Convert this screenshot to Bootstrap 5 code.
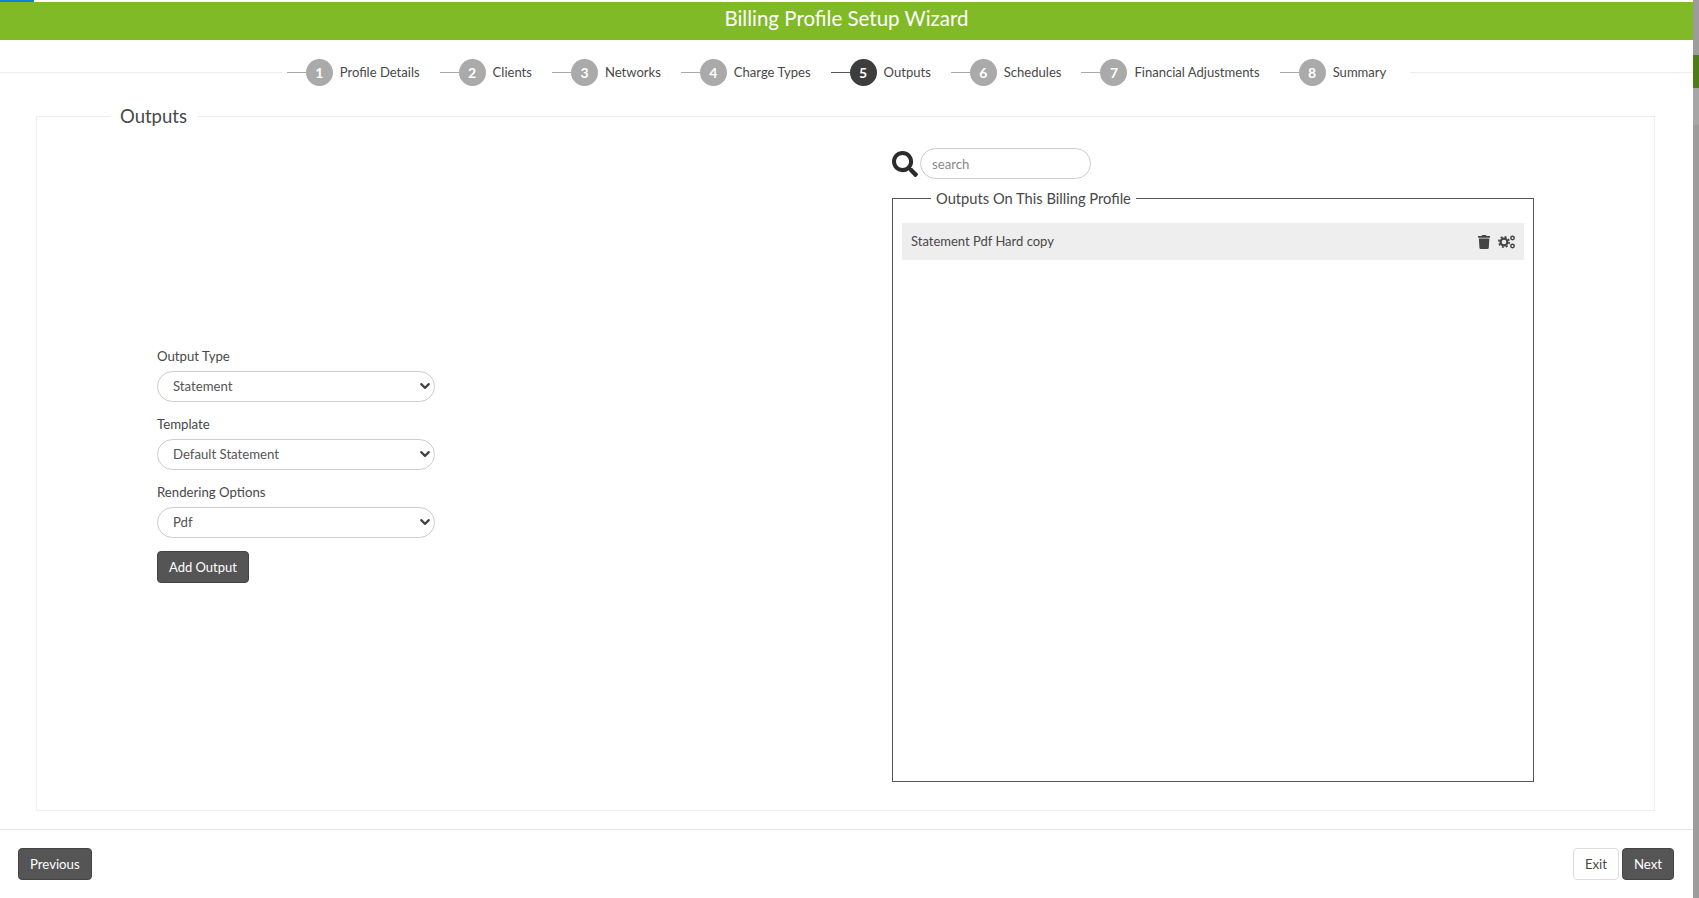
<!DOCTYPE html>
<html lang="en">
  <head>
    <meta charset="UTF-8" />
    <meta name="viewport" content="width=device-width, initial-scale=1.0" />
    <title>Billing Profile Setup Wizard</title>
    <link
      href="https://cdn.jsdelivr.net/npm/bootstrap@5.3.0/dist/css/bootstrap.min.css"
      rel="stylesheet"
    />
    <style>
      html,
      body {
        height: 100%;
        overflow: hidden;
      }
      body {
        font-family: Lato, "Liberation Sans", sans-serif;
        font-size: 13.2px;
        color: #484848;
        background-color: #fff;
      }
      .page-shell {
        height: 898px;
      }
      /* scrollbar strip on the right */
      .fake-scroll {
        width: 6px;
        background-color: #9c9c9c;
      }
      .fake-scroll-top {
        height: 55px;
      }
      .fake-scroll-thumb {
        height: 33px;
        background-color: #4f7a1a;
      }
      .fake-scroll-mid {
        height: 37px;
        background-color: #a6a6a6;
      }
      .load-strip {
        height: 2px;
      }
      .load-bar {
        width: 34px;
        background-color: #0a84d6;
      }
      .wizard-title {
        height: 38px;
        background-color: #80ba27;
        color: #fff;
        font-size: 20.5px;
        line-height: 32px;
        text-align: center;
      }
      /* stepper */
      .stepper {
        height: 28px;
        margin-top: 18px;
      }
      .stepper-rule {
        height: 1px;
        background-color: #eee;
      }
      .stepper-list {
        padding: 0 4px;
      }
      .step-item {
        padding-right: 20px;
      }
      .step-label {
        padding-top: 1px;
        font-size: 13.05px;
      }
      .step-line {
        width: 19px;
        height: 1px;
        background-color: #aaa;
      }
      .step-num {
        width: 27px;
        height: 27px;
        border-radius: 50%;
        background-color: #aaa;
        color: #fff;
        font-weight: 700;
        font-size: 14px;
        margin-right: 7px;
      }
      .step-item.is-current .step-num {
        background-color: #3d3d3d;
      }
      .step-item.is-current .step-line {
        background-color: #555;
      }
      /* fieldsets */
      .outer-set {
        margin: 17px 38px 0 36px;
        height: 708px;
        border: 1px solid #eee;
      }
      .outer-set > legend {
        float: none;
        width: auto;
        margin: 0 0 0 73px;
        padding: 0 10px;
        font-size: 18.5px;
        line-height: 26px;
        color: #484848;
      }
      .set-body {
        height: 633px;
        margin-top: 19px;
      }
      .form-side {
        width: 809px;
        padding-left: 120px;
      }
      .form-box {
        width: 278px;
      }
      .form-box .form-label {
        display: block;
        margin-bottom: 6px;
        line-height: 18px;
      }
      .form-box .form-select {
        height: 31px;
        border-radius: 16px;
        padding: 2px 24px 0 15px;
        font-size: 13.2px;
        color: #555;
        border-color: #ccc;
        background-image: url("data:image/svg+xml,%3csvg xmlns='http://www.w3.org/2000/svg' viewBox='0 0 16 16'%3e%3cpath fill='none' stroke='%23444' stroke-linecap='round' stroke-linejoin='round' stroke-width='3.4' d='m2 5 6 6 6-6'/%3e%3c/svg%3e");
        background-position: right 4px center;
        background-size: 10px 10px;
      }
      .field-gap {
        margin-bottom: 13px;
      }
      .btn-dark-grey {
        background-color: #555;
        border-color: #444;
        color: #fff;
        font-size: 13.2px;
        height: 32px;
        line-height: 20px;
        padding: 5px 11px;
        border-radius: 4px;
      }
      .btn-dark-grey:hover {
        background-color: #444;
        color: #fff;
      }
      .btn-plain {
        background-color: #fff;
        border-color: #ddd;
        color: #484848;
        font-size: 13.2px;
        height: 32px;
        line-height: 20px;
        padding: 5px 11px;
        border-radius: 4px;
      }
      .form-box .btn-dark-grey {
        font-size: 13px;
      }
      .foot-right {
        gap: 3px;
      }
      .list-side {
        padding-left: 46px;
      }
      .search-glass {
        width: 26px;
        height: 26px;
        margin-right: 2px;
        fill: #2b2b2b;
      }
      .search-box {
        width: 171px;
        height: 31px;
        border-radius: 16px;
        padding: 1px 11px 0;
        font-size: 13.2px;
        border-color: #ccc;
      }
      .search-box::placeholder {
        color: #888;
      }
      .inner-set {
        width: 642px;
        height: 594px;
        margin-top: 9px;
        border: 1px solid #555;
        padding: 0 9px;
      }
      .inner-set > legend {
        float: none;
        width: auto;
        margin: 0 0 0 29px;
        padding: 0 5px;
        font-size: 14.7px;
        line-height: 20px;
        color: #484848;
      }
      .output-row {
        height: 37px;
        margin-top: 15px;
        padding: 1px 8px 0 9px;
        background-color: #eee;
        font-size: 13px;
      }
      .row-icon {
        height: 14px;
        fill: #444;
      }
      .wizard-foot {
        margin-top: 18px;
        border-top: 1px solid #e4e4e4;
        padding: 18px 19px 0 18px;
      }
    </style>
  </head>
  <body>
    <div class="page-shell d-flex">
      <div class="flex-grow-1 d-flex flex-column">
        <div class="load-strip d-flex"><div class="load-bar"></div></div>
        <div class="wizard-title">Billing Profile Setup Wizard</div>

        <!-- steps -->
        <div class="stepper d-flex align-items-center">
          <div class="stepper-rule flex-grow-1"></div>
          <div class="stepper-list d-flex align-items-center">
            <div class="step-item d-flex align-items-center">
              <span class="step-line"></span>
              <span class="step-num d-flex align-items-center justify-content-center">1</span>
              <span class="step-label">Profile Details</span>
            </div>
            <div class="step-item d-flex align-items-center">
              <span class="step-line"></span>
              <span class="step-num d-flex align-items-center justify-content-center">2</span>
              <span class="step-label">Clients</span>
            </div>
            <div class="step-item d-flex align-items-center">
              <span class="step-line"></span>
              <span class="step-num d-flex align-items-center justify-content-center">3</span>
              <span class="step-label">Networks</span>
            </div>
            <div class="step-item d-flex align-items-center">
              <span class="step-line"></span>
              <span class="step-num d-flex align-items-center justify-content-center">4</span>
              <span class="step-label">Charge Types</span>
            </div>
            <div class="step-item is-current d-flex align-items-center">
              <span class="step-line"></span>
              <span class="step-num d-flex align-items-center justify-content-center">5</span>
              <span class="step-label">Outputs</span>
            </div>
            <div class="step-item d-flex align-items-center">
              <span class="step-line"></span>
              <span class="step-num d-flex align-items-center justify-content-center">6</span>
              <span class="step-label">Schedules</span>
            </div>
            <div class="step-item d-flex align-items-center">
              <span class="step-line"></span>
              <span class="step-num d-flex align-items-center justify-content-center">7</span>
              <span class="step-label">Financial Adjustments</span>
            </div>
            <div class="step-item d-flex align-items-center">
              <span class="step-line"></span>
              <span class="step-num d-flex align-items-center justify-content-center">8</span>
              <span class="step-label">Summary</span>
            </div>
          </div>
          <div class="stepper-rule flex-grow-1"></div>
        </div>

        <fieldset class="outer-set">
          <legend>Outputs</legend>
          <div class="set-body d-flex">
            <div class="form-side d-flex align-items-center">
              <form class="form-box">
                <div class="field-gap">
                  <label class="form-label" for="outputType">Output Type</label>
                  <select class="form-select" id="outputType">
                    <option>Statement</option>
                  </select>
                </div>
                <div class="field-gap">
                  <label class="form-label" for="templateSel">Template</label>
                  <select class="form-select" id="templateSel">
                    <option>Default Statement</option>
                  </select>
                </div>
                <div class="field-gap">
                  <label class="form-label" for="renderSel">Rendering Options</label>
                  <select class="form-select" id="renderSel">
                    <option>Pdf</option>
                  </select>
                </div>
                <button type="button" class="btn btn-dark-grey">Add Output</button>
              </form>
            </div>
            <div class="list-side">
              <div class="d-flex align-items-center">
                <svg class="search-glass" viewBox="0 0 512 512">
                  <path d="M505 442.7L405.3 343c-4.5-4.5-10.6-7-17-7H372c27.6-35.3 44-79.7 44-128C416 93.1 322.9 0 208 0S0 93.1 0 208s93.1 208 208 208c48.3 0 92.7-16.4 128-44v16.3c0 6.4 2.5 12.5 7 17l99.7 99.7c9.4 9.4 24.6 9.4 33.9 0l28.3-28.3c9.4-9.4 9.4-24.6.1-34zM208 336c-70.7 0-128-57.2-128-128 0-70.7 57.2-128 128-128 70.7 0 128 57.2 128 128 0 70.7-57.2 128-128 128z" />
                </svg>
                <input class="form-control search-box" type="text" placeholder="search" />
              </div>
              <fieldset class="inner-set">
                <legend>Outputs On This Billing Profile</legend>
                <div class="output-row d-flex align-items-center justify-content-between">
                  <span>Statement Pdf Hard copy</span>
                  <span class="d-flex align-items-center gap-2">
                    <svg class="row-icon" viewBox="0 0 448 512">
                      <path d="M432 32H312l-9.4-18.7A24 24 0 0 0 281.1 0H166.8a23.72 23.72 0 0 0-21.4 13.3L136 32H16A16 16 0 0 0 0 48v32a16 16 0 0 0 16 16h416a16 16 0 0 0 16-16V48a16 16 0 0 0-16-16zM53.2 467a48 48 0 0 0 47.9 45h245.8a48 48 0 0 0 47.9-45L416 128H32z" />
                    </svg>
                    <svg class="row-icon" viewBox="0 0 18 14">
                      <circle cx="6" cy="7" r="3.4" fill="none" stroke="#444" stroke-width="2.2" />
                      <circle cx="6" cy="7" r="5.2" fill="none" stroke="#444" stroke-width="1.6" stroke-dasharray="2 2.08" />
                      <circle cx="14.5" cy="3" r="1.7" fill="none" stroke="#444" stroke-width="1.5" />
                      <circle cx="14.5" cy="11" r="1.7" fill="none" stroke="#444" stroke-width="1.5" />
                    </svg>
                  </span>
                </div>
              </fieldset>
            </div>
          </div>
        </fieldset>

        <div class="wizard-foot d-flex">
          <button type="button" class="btn btn-dark-grey">Previous</button>
          <div class="ms-auto d-flex foot-right">
            <button type="button" class="btn btn-plain">Exit</button>
            <button type="button" class="btn btn-dark-grey">Next</button>
          </div>
        </div>
      </div>
      <div class="fake-scroll">
        <div class="fake-scroll-top"></div>
        <div class="fake-scroll-thumb"></div>
        <div class="fake-scroll-mid"></div>
      </div>
    </div>
    <script src="https://cdn.jsdelivr.net/npm/bootstrap@5.3.0/dist/js/bootstrap.bundle.min.js"></script>
  </body>
</html>
